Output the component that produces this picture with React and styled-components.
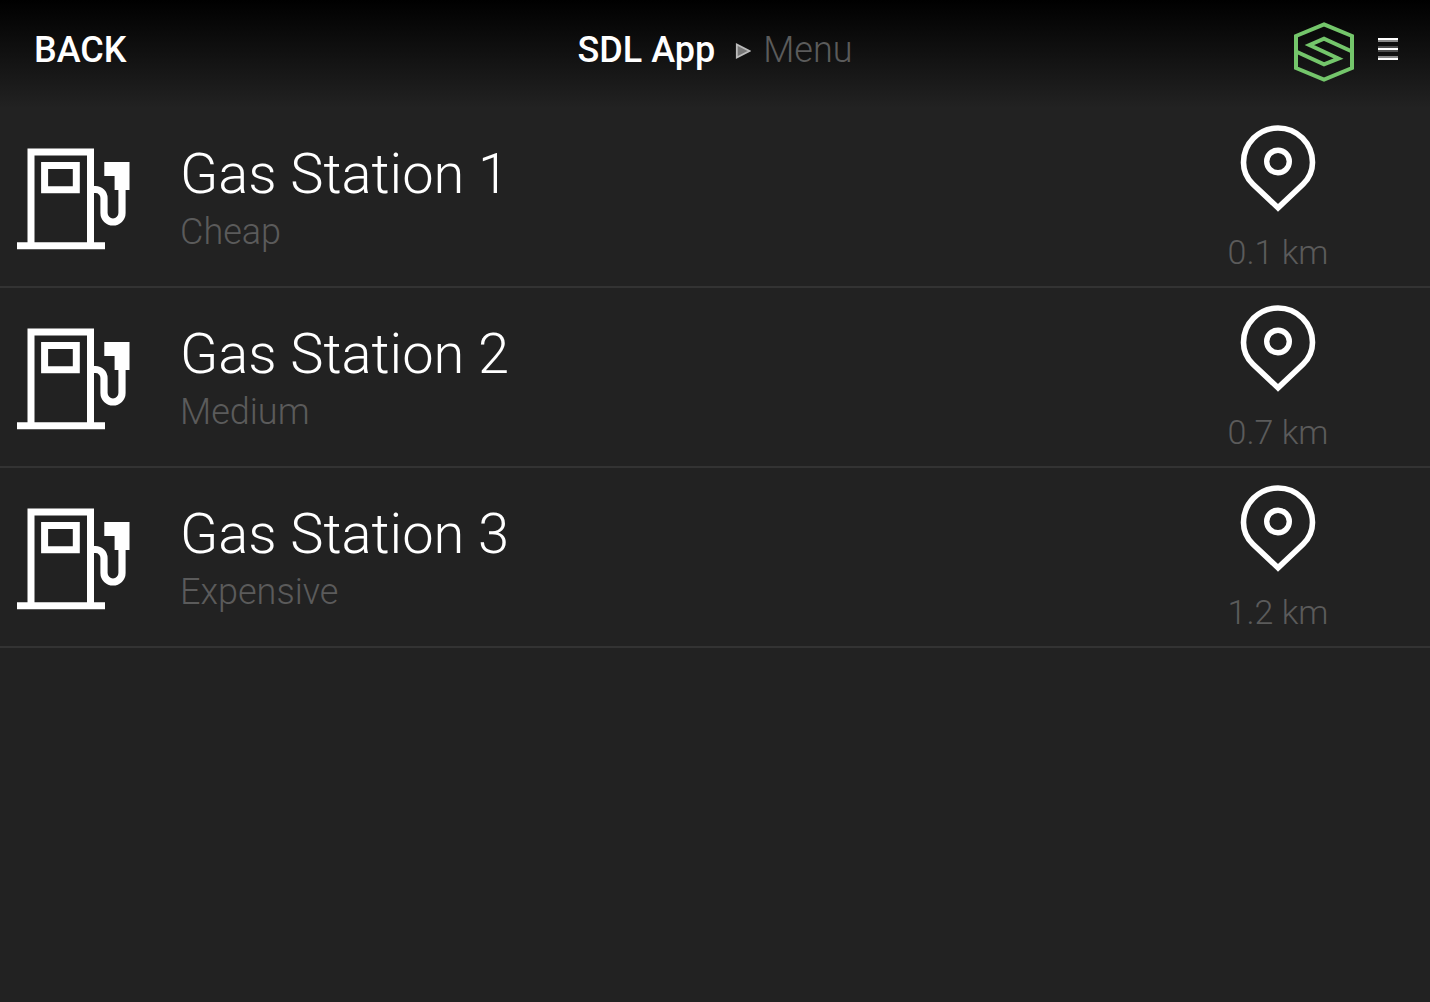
import React from "react";
import styled, { createGlobalStyle } from "styled-components";

const GlobalStyle = createGlobalStyle`
  *, *::before, *::after { box-sizing: border-box; }
  body {
    margin: 0;
    background: #222;
    color: #fff;
    font-family: Roboto, "Liberation Sans", sans-serif;
  }
`;

const Screen = styled.div`
  min-height: 100vh;
  background: #222;
`;

const Header = styled.header`
  display: grid;
  grid-template-columns: 1fr auto 1fr;
  align-items: center;
  height: 108px;
  padding: 0 32px 8px;
  background: linear-gradient(#000, #222);
`;

const PlainButton = styled.button`
  padding: 0;
  border: 0;
  background: none;
  color: inherit;
  font: inherit;
  cursor: pointer;
`;

const BackButton = styled(PlainButton)`
  justify-self: start;
  padding: 0 2px;
  font-size: 36px;
  line-height: 48px;
  font-weight: 500;
`;

const Breadcrumb = styled.nav`
  display: flex;
  align-items: center;
  font-size: 36px;
  line-height: 48px;
`;

const AppName = styled.span`
  font-weight: 500;
`;

const Separator = styled.svg`
  width: 16px;
  height: 16px;
  margin: 2px 12px 0 20px;
`;

const PageName = styled.span`
  color: #5b5b5b;
  font-weight: 300;
`;

const HeaderActions = styled.div`
  justify-self: end;
  display: flex;
  align-items: center;
  gap: 24px;
`;

const Logo = styled.svg`
  display: block;
  width: 60px;
  height: 60px;
  margin-top: 4px;
`;

const MenuButton = styled(PlainButton)`
  padding-bottom: 2px;
`;

const MenuIcon = styled.svg`
  display: block;
  width: 20px;
  height: 22px;
`;

const StationList = styled.ul`
  margin: 0;
  padding: 0;
  list-style: none;
`;

const StationButton = styled(PlainButton)`
  display: flex;
  width: 100%;
  height: 180px;
  border-bottom: 2px solid #333;
  text-align: left;
`;

const IconCell = styled.span`
  flex: none;
  align-self: center;
  width: 180px;
  padding: 4px 0 0 16px;
`;

const PumpSvg = styled.svg`
  display: block;
  width: 116px;
  height: 104px;
`;

const Details = styled.span`
  flex: 1;
  display: flex;
  flex-direction: column;
  padding-top: 30px;
`;

const Title = styled.span`
  font-size: 56px;
  line-height: 72px;
  font-weight: 300;
`;

const Caption = styled.span`
  color: #5b5b5b;
  font-size: ${({ $compact }) => ($compact ? 34 : 36)}px;
  line-height: 44px;
  font-weight: 300;
`;

const Location = styled.span`
  flex: none;
  display: flex;
  flex-direction: column;
  align-items: center;
  gap: 16px;
  width: 304px;
  padding-top: 16px;
`;

const PinSvg = styled.svg`
  display: block;
  width: 76px;
  height: 90px;
`;

const STATIONS = [
  { name: "Gas Station 1", price: "Cheap", distance: "0.1 km" },
  { name: "Gas Station 2", price: "Medium", distance: "0.7 km" },
  { name: "Gas Station 3", price: "Expensive", distance: "1.2 km" },
];

function SdlLogo() {
  return (
    <Logo viewBox="0 0 60 60" fill="none" stroke="#74c66b" strokeWidth="4" aria-hidden="true">
      <path d="M30 2.4 58 14v32L30 57.6 2 46V14Z" />
      <path d="M2 29.5 30 42.3 44.5 36.5 15.5 23 30 16.7 58 29.5" />
    </Logo>
  );
}

function Hamburger() {
  return (
    <MenuIcon viewBox="0 0 20 22" aria-hidden="true">
      <path fill="#888" d="M0 2h20v2H0zM0 18h20v2H0z" />
      <path fill="#4c4c4c" d="M0 8h20v6H0z" />
      <path fill="#fff" d="M0 0h20v2H0zM0 10h20v2H0zM0 20h20v2H0z" />
    </MenuIcon>
  );
}

function GasPump() {
  return (
    <PumpSvg viewBox="0 0 116 104" fill="none" stroke="#fff" strokeWidth="7" aria-hidden="true">
      <path d="M15 98V5h59.5v93" />
      <path d="M1 98.8h88" />
      <path d="M28.6 18.6H60.3v24.2H28.6z" />
      <path strokeWidth="7.2" d="M78 42.5h1.5a8.5 8.5 0 0 1 8.5 8.5v15a9 9 0 0 0 18 0V43" />
      <path fill="#fff" stroke="none" d="M88.3 15H113.5v28H98.6V29H88.3z" />
    </PumpSvg>
  );
}

function Pin() {
  return (
    <PinSvg viewBox="0 0 76 90" fill="none" stroke="#fff" strokeWidth="5.6" aria-hidden="true">
      <path d="M38 83.8 13 60.2C7 54.5 3.5 47 3.5 38.5a34.5 34.5 0 0 1 69 0c0 8.5-3.5 16-9.5 21.7Z" />
      <circle cx="38" cy="37.5" r="11.3" strokeWidth="5.4" />
    </PinSvg>
  );
}

function StationRow({ station }) {
  return (
    <li>
      <StationButton type="button">
        <IconCell>
          <GasPump />
        </IconCell>
        <Details>
          <Title>{station.name}</Title>
          <Caption>{station.price}</Caption>
        </Details>
        <Location>
          <Pin />
          <Caption $compact>{station.distance}</Caption>
        </Location>
      </StationButton>
    </li>
  );
}

export default function App() {
  return (
    <Screen>
      <GlobalStyle />
      <Header>
        <BackButton type="button">BACK</BackButton>
        <Breadcrumb aria-label="Breadcrumb">
          <AppName>SDL App</AppName>
          <Separator viewBox="0 0 16 16" aria-hidden="true">
            <path d="M1.8 1.5v13L14.5 8Z" fill="#777" stroke="#bbb" strokeWidth="1.8" />
          </Separator>
          <PageName>Menu</PageName>
        </Breadcrumb>
        <HeaderActions>
          <SdlLogo />
          <MenuButton type="button" aria-label="Open menu">
            <Hamburger />
          </MenuButton>
        </HeaderActions>
      </Header>
      <main>
        <StationList>
          {STATIONS.map((station) => (
            <StationRow key={station.name} station={station} />
          ))}
        </StationList>
      </main>
    </Screen>
  );
}
